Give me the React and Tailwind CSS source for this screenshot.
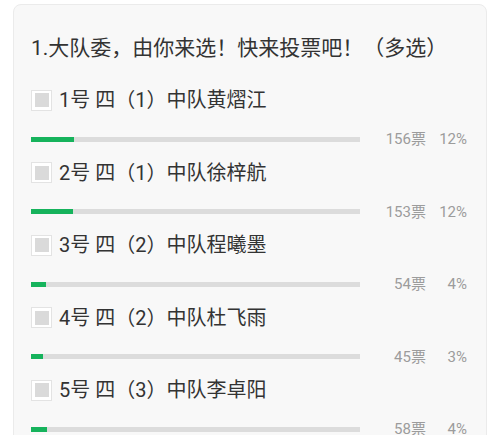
import React from "react";

const options = [
  { label: "1号 四（1）中队黄熠江", votes: 156, pct: 12, fill: 43 },
  { label: "2号 四（1）中队徐梓航", votes: 153, pct: 12, fill: 42 },
  { label: "3号 四（2）中队程曦墨", votes: 54, pct: 4, fill: 15 },
  { label: "4号 四（2）中队杜飞雨", votes: 45, pct: 3, fill: 12 },
  { label: "5号 四（3）中队李卓阳", votes: 58, pct: 4, fill: 16 },
];

export default function App() {
  return (
    <div
      className="w-[499px] h-[435px] bg-white overflow-hidden"
      style={{ fontFamily: 'Roboto, "Noto Sans CJK SC", sans-serif' }}
    >
      <div className="ml-[13px] mt-[4px] w-[474px] h-[460px] bg-[#f8f8f8] border border-[#ebebeb] rounded-[8px] pl-[17px] pt-[29px]">
        <div className="text-[21px] leading-[28px] text-[#333]">
          1.大队委，由你来选！快来投票吧！（多选）
        </div>
        <div className="mt-[28px] flex flex-col gap-[13.5px]">
          {options.map((o) => (
            <div key={o.label} className="flex flex-col">
              <div className="flex items-center h-[20px]">
                <div className="w-[21px] h-[21px] bg-white border border-[#e3e3e3] flex items-center justify-center">
                  <div className="w-[14px] h-[14px] bg-[#dadada]" />
                </div>
                <div className="ml-[7px] text-[20px] leading-[20px] text-[#333]">
                  {o.label}
                </div>
              </div>
              <div className="mt-[19px] flex items-center h-[20px]">
                <div className="w-[329px] h-[5px] bg-[#dcdcdc] flex">
                  <div className="h-full bg-[#16b35c]" style={{ width: o.fill + "px" }} />
                </div>
                <div className="w-[66px] text-right text-[15px] leading-[20px] text-[#9c9c9c]">
                  {o.votes}票
                </div>
                <div className="w-[41px] text-right text-[15px] leading-[20px] text-[#9c9c9c]">
                  {o.pct}%
                </div>
              </div>
            </div>
          ))}
        </div>
      </div>
    </div>
  );
}
